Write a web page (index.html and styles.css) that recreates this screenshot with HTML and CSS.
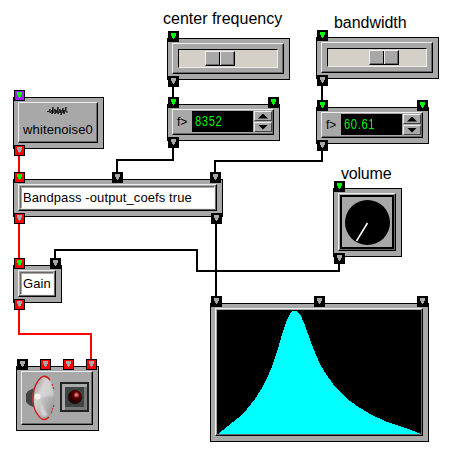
FILE: index.html
```html
<!DOCTYPE html>
<html lang="en">
<head>
<meta charset="utf-8">
<title>Patch</title>
<link rel="stylesheet" href="styles.css">
</head>
<body>
<main class="canvas">
  <svg class="wires" width="464" height="461" viewBox="0 0 464 461">
    <path d="M173 87V97M322 86V100M173 148V160H117V172M322 151V161H215V172M216 224V296M339 264V271H197V250H55V258"/>
    <path class="hot" d="M19 156V172M19 224V258M19 310V334H91V359"/>
  </svg>

  <span class="label frequency-label">center frequency</span>
  <span class="label bandwidth-label">bandwidth</span>
  <span class="label volume-label">volume</span>

  <section class="node slider frequency-slider"><div class="panel"><div class="track"><div class="thumb"><i></i><i></i></div></div></div></section>
  <section class="node slider bandwidth-slider"><div class="panel"><div class="track"><div class="thumb"><i></i><i></i></div></div></div></section>

  <section class="node number frequency-number"><div class="panel"><span class="prefix">f&gt;</span><output><span>8352</span></output><div class="spin"><i class="up"></i><i class="down"></i></div></div></section>
  <section class="node number bandwidth-number"><div class="panel"><span class="prefix">f&gt;</span><output><span>60.61</span></output><div class="spin"><i class="up"></i><i class="down"></i></div></div></section>

  <section class="node noise"><div class="panel">
    <svg width="22" height="11" viewBox="0 0 22 11"><path d="M0 5.5H2L3 3V7L5 4V8L6 1V7L8 3V8L9 4L10 7L11 1V8L13 3V7L14 4V9L16 2V7L17 4V8L19 1V6H21" fill="none" stroke="#000" stroke-width=".8"/></svg>
    <span>whitenoise0</span></div></section>

  <section class="node bandpass"><div class="panel"><div class="field">Bandpass -output_coefs true</div></div></section>
  <section class="node gain"><div class="panel"><div class="field">Gain</div></div></section>

  <section class="node knob"><div class="panel"><div class="well">
    <svg width="50" height="50" viewBox="342 197 50 50"><circle cx="367.5" cy="222.5" r="22.5"/><path d="M367.5 223L356.5 241" stroke="#fff" stroke-width="1.5"/></svg></div></div></section>

  <section class="node graph"><div class="panel">
    <svg width="204" height="124" viewBox="217 310 204 124"><path fill="#0ff" d="M218 434L228 426L238 418L247 409L255 399L262 388L268 376L273 364L277 352L281 338L285 325L288 318L290 314L292 311.5L294 311H296L298 312L301 316L304 323L308 334L312 345L316 355L320 364L326 374L333 384L341 393L350 401L360 408L372 415L385 421L399 426L411 430L421 434Z"/></svg></div></section>

  <section class="node speaker"><div class="panel">
    <svg width="36" height="46" viewBox="25 375 36 46">
      <defs>
        <linearGradient id="cone" x1="0" y1="0" x2="1" y2="1"><stop offset="0" stop-color="#888"/><stop offset=".35" stop-color="#d2d2d2"/><stop offset=".6" stop-color="#b4b4b4"/><stop offset="1" stop-color="#888"/></linearGradient>
        <filter id="soft"><feGaussianBlur stdDeviation="1"/></filter>
      </defs>
      <path d="M34 388L28 391L26 394V402L29 405L35 408Z" fill="#444"/>
      <ellipse cx="44" cy="398" rx="11" ry="21.5" fill="url(#cone)"/>
      <path d="M39 397L47 379L52 386L54 396Z" fill="#ddd" opacity=".6" filter="url(#soft)"/>
      <path d="M39 400L42 416L48 416Z" fill="#e4e4e4" opacity=".8" filter="url(#soft)"/>
      <ellipse cx="44" cy="398" rx="11" ry="21.5" fill="none" stroke="#aaa"/>
      <path d="M50 380Q44 372 38 381Q33 388 33 398Q33 409 38 415Q43 423 49 417" fill="none" stroke="#d01818" stroke-width="1.3"/>
      <path d="M52 384L54 390M54 405L51 414" stroke="#d01818" stroke-dasharray="2 1"/>
      <circle cx="37.5" cy="396.5" r="3" fill="#f2f2f2"/>
    </svg>
    <div class="lamp"><i></i></div></div></section>

  <i class="port green" style="left:168px;top:31px"></i><i class="port" style="left:168px;top:76px"></i>
  <i class="port green" style="left:317px;top:30px"></i><i class="port" style="left:317px;top:75px"></i>
  <i class="port green" style="left:168px;top:97px"></i><i class="port green" style="left:268px;top:97px"></i><i class="port" style="left:168px;top:137px"></i>
  <i class="port green" style="left:317px;top:100px"></i><i class="port green" style="left:417px;top:100px"></i><i class="port" style="left:317px;top:140px"></i>
  <i class="port green purple" style="left:14px;top:90px"></i><i class="port red" style="left:14px;top:145px"></i>
  <i class="port green red" style="left:14px;top:172px"></i><i class="port" style="left:112px;top:172px"></i><i class="port" style="left:210px;top:172px"></i>
  <i class="port red" style="left:14px;top:213px"></i><i class="port" style="left:211px;top:213px"></i>
  <i class="port green red" style="left:14px;top:258px"></i><i class="port" style="left:50px;top:258px"></i><i class="port red" style="left:14px;top:299px"></i>
  <i class="port green" style="left:334px;top:181px"></i><i class="port" style="left:334px;top:253px"></i>
  <i class="port" style="left:211px;top:296px"></i><i class="port" style="left:314px;top:296px"></i><i class="port" style="left:417px;top:296px"></i>
  <i class="port" style="left:17px;top:359px"></i><i class="port red" style="left:40px;top:359px"></i><i class="port red" style="left:63px;top:359px"></i><i class="port red" style="left:86px;top:359px"></i>
</main>
</body>
</html>
```
FILE: styles.css
```css
* { box-sizing: border-box; }
body { margin: 0; background: #fff; color: #000; font: 13px/16px "Liberation Sans", Arial, sans-serif; }
.canvas { position: relative; width: 464px; height: 461px; overflow: hidden; }
svg { display: block; flex: none; }
.wires { position: absolute; inset: 0; fill: none; stroke: #000; stroke-width: 2; shape-rendering: crispEdges; }
.hot { stroke: #f00; }

.label { position: absolute; font-size: 16px; line-height: 18px; white-space: nowrap; }
.frequency-label { left: 163px; top: 10px; }
.bandwidth-label { left: 334px; top: 14px; letter-spacing: -.05px; }
.volume-label { left: 341px; top: 165px; letter-spacing: -.2px; }

.node { position: absolute; display: flex; border: 1px solid #000; background: #a8a8a8; padding: 4px; }
.panel { display: flex; flex: none; border: 1px solid; border-color: #eee #000 #000 #eee; box-shadow: inset -1px -1px #686868; }

.slider { width: 123px; height: 42px; }
.slider .panel { width: 112px; height: 31px; padding: 5px; }
.frequency-slider { left: 167px; top: 38px; }
.bandwidth-slider { left: 316px; top: 37px; }
.track { width: 100px; height: 19px; padding: 1px; background: #d4d0c8; border: 1px solid; border-color: #000 #eee #eee #000; }
.thumb { display: flex; width: 30px; height: 15px; margin-left: 25px; background: #a8a8a8; border: 1px solid; border-color: #eee #000 #000 #eee; box-shadow: inset -1px -1px #686868; }
.bandwidth-slider .thumb { margin-left: 40px; }
.thumb i { width: 14px; border-right: 1px solid #000; }
.thumb i + i { border-right: 0; border-left: 1px solid #eee; }

.number { width: 113px; height: 37px; }
.number .panel { width: 102px; height: 26px; padding: 1px; }
.frequency-number { left: 167px; top: 104px; }
.bandwidth-number { left: 316px; top: 107px; }
.prefix { width: 18px; padding-left: 3px; line-height: 22px; font-size: 12px; }
.number output { width: 61px; height: 21px; padding-left: 3px; background: #000; color: #0f0; font-size: 14px; line-height: 21px; }
.number output span { display: inline-block; letter-spacing: .8px; transform: scaleX(.8); transform-origin: left; }
.spin { display: grid; gap: 1px; width: 18px; height: 21px; margin-left: 1px; }
.spin i { display: grid; place-items: center; border: 1px solid; border-color: #eee #444 #444 #eee; }
.spin i::before { content: ""; width: 10px; height: 5px; background: #000; clip-path: polygon(50% 0, 100% 100%, 0 100%); }
.spin .down::before { clip-path: polygon(0 0, 100% 0, 50% 100%); }

.noise { left: 13px; top: 97px; width: 91px; height: 52px; }
.noise .panel { width: 80px; height: 41px; flex-direction: column; align-items: center; padding-top: 3px; }
.noise span { margin-top: 5px; letter-spacing: .1px; }

.bandpass { left: 13px; top: 179px; width: 210px; height: 38px; }
.bandpass .panel { width: 199px; height: 27px; padding: 1px; }
.field { width: 195px; padding: 0 0 0 2px; background: #fff; border: 1px solid; border-color: #686868 #eee #eee #686868; box-shadow: inset 1px 1px #aaa69c; line-height: 22px; white-space: nowrap; height: 23px; letter-spacing: .1px; }
.gain { left: 13px; top: 265px; width: 49px; height: 38px; }
.gain .panel { width: 38px; height: 27px; padding: 1px; }
.gain .field { width: 34px; }

.knob { left: 333px; top: 188px; width: 69px; height: 69px; }
.knob .panel { width: 58px; height: 58px; padding: 1px; }
.well { width: 54px; height: 54px; border: 2px solid #000; display: flex; }

.graph { left: 210px; top: 303px; width: 219px; height: 139px; }
.graph .panel { width: 208px; height: 128px; padding: 1px; }
.graph svg { background: #000; shape-rendering: crispEdges; }

.speaker { left: 16px; top: 366px; width: 83px; height: 65px; }
.speaker .panel { width: 72px; height: 54px; padding: 3px; }
.lamp { display: grid; place-items: center; width: 29px; height: 30px; margin: 7px 0 0 -1px; border: 2px solid #222; background: #3c4541; box-shadow: inset 3px 3px #aaa, inset -3px -3px #777; }
.lamp i { width: 14px; height: 14px; border-radius: 50%; background: radial-gradient(circle at 60% 35%, #d77 0 1px, #600000 3px, #300000 6px, #150000); }

.port { position: absolute; width: 11px; height: 11px; border: 1px solid #000; background: #000; }
.port::before { content: ""; position: absolute; left: 2px; top: 1px; width: 5px; height: 6px; background: #a8a8a8; clip-path: polygon(0 0, 5px 0, 5px 3px, 4px 3px, 4px 5px, 3px 5px, 3px 6px, 2px 6px, 2px 5px, 1px 5px, 1px 3px, 0 3px); }
.port.green::before { background: #0f0; }
.red { background: #f00; }
.purple { background: #a020f0; }
```
